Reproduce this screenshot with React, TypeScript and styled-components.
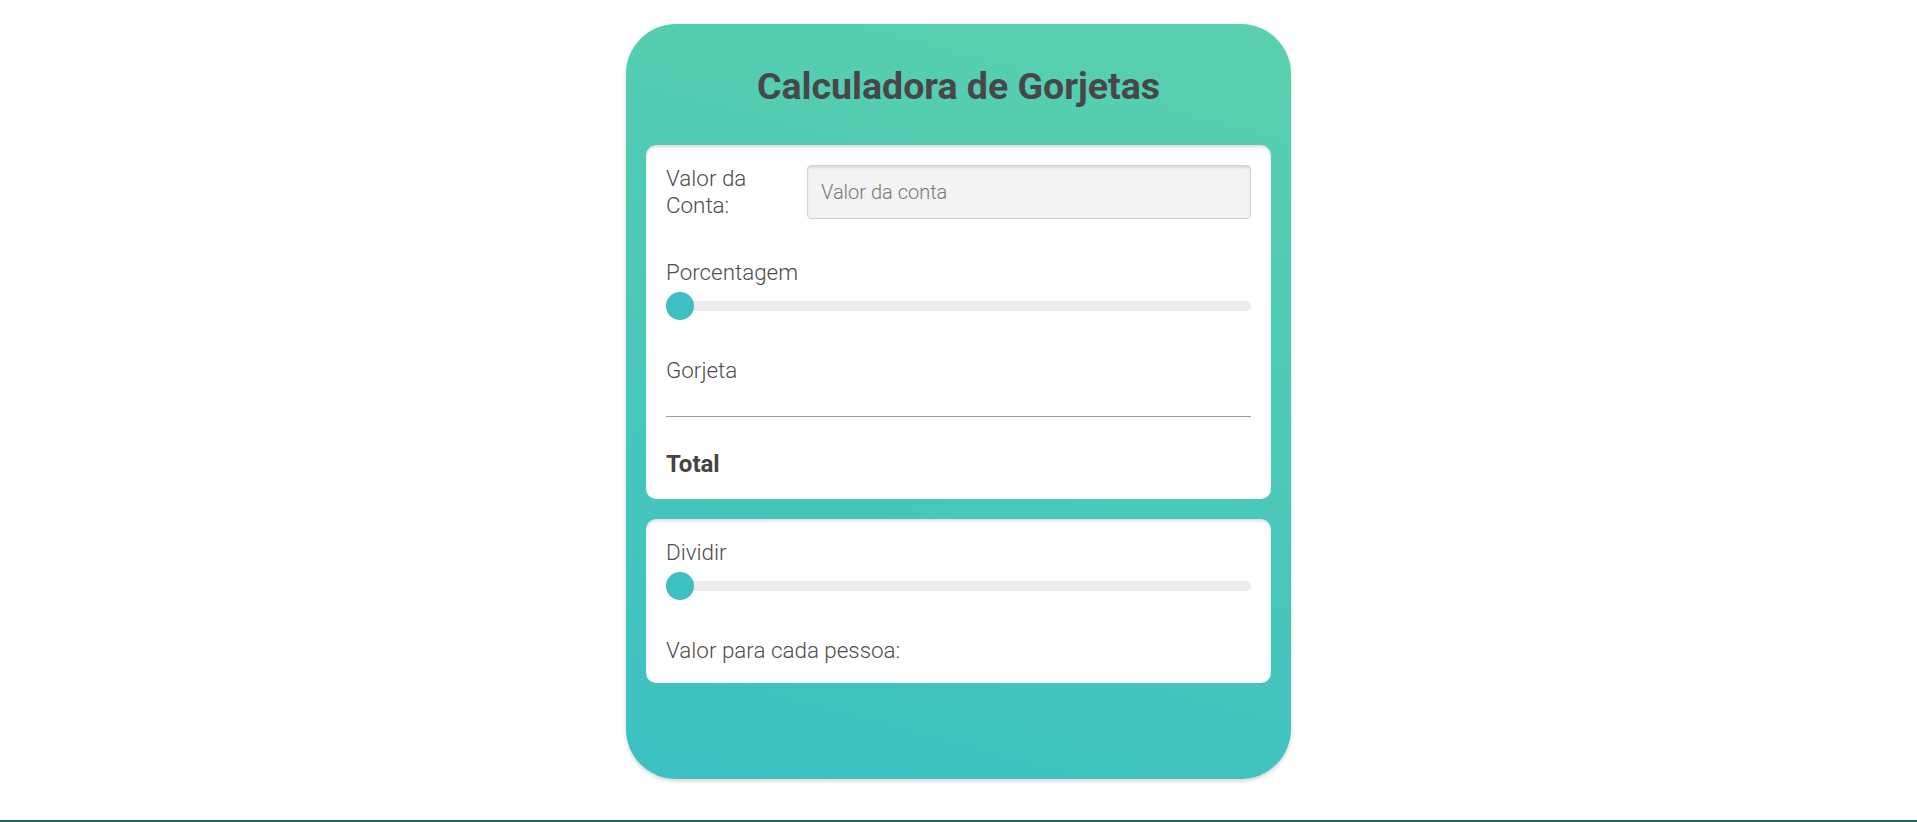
import React, { useState } from "react";
import styled, { createGlobalStyle } from "styled-components";

const GlobalStyle = createGlobalStyle`
    body {
        margin: 0;
        background: #ffffff;
        font-family: Roboto, "Open Sans", Arial, sans-serif;
    }
`;

const Page = styled.main`
    padding-top: 24px;
`;

const Calculator = styled.section`
    width: 665px;
    box-sizing: border-box;
    margin: 0 auto;
    padding: 40px 20px 96px;
    border-radius: 50px;
    background: linear-gradient(15deg, #3cc0c2 0%, #5ad0ae 100%);
    box-shadow: 0 2px 4px rgba(0, 0, 0, 0.18);
`;

const Title = styled.h1`
    margin: 0 0 37px;
    text-align: center;
    font-size: 37.5px;
    font-weight: 700;
    line-height: 44px;
    color: #474747;
`;

const Panel = styled.div<{ $bottom?: number }>`
    background: #ffffff;
    border-radius: 10px;
    padding: 20px 20px ${(p) => p.$bottom ?? 21}px;
    box-shadow: inset 0 2px 3px rgba(0, 0, 0, 0.14);

    & + & {
        margin-top: 20px;
    }
`;

const Row = styled.div`
    display: flex;
    align-items: flex-start;
`;

const Label = styled.label<{ $gap?: number; $bold?: boolean }>`
    display: block;
    margin-top: ${(p) => p.$gap ?? 0}px;
    font-size: ${(p) => (p.$bold ? 24 : 22.4)}px;
    font-weight: ${(p) => (p.$bold ? 700 : 300)};
    line-height: 27px;
    color: ${(p) => (p.$bold ? "#444444" : "#4d4d4d")};
`;

const BillLabel = styled(Label)`
    flex: 0 0 141px;
`;

const BillInput = styled.input`
    flex: 1;
    min-width: 0;
    height: 54px;
    box-sizing: border-box;
    padding: 0 13px;
    border: 1px solid #d2d2d2;
    border-radius: 4px;
    background: #f3f3f3;
    box-shadow: inset 0 2px 2px rgba(0, 0, 0, 0.1);
    font-family: inherit;
    font-size: 20px;
    font-weight: 300;
    color: #444;
    outline: none;

    &::placeholder {
        color: #777777;
    }
`;

const Slider = styled.input`
    display: block;
    width: 100%;
    height: 28px;
    margin: 6px 0 0;
    background: transparent;
    appearance: none;
    -webkit-appearance: none;

    &::-webkit-slider-runnable-track {
        height: 10px;
        border-radius: 5px;
        background: #ececec;
    }

    &::-webkit-slider-thumb {
        -webkit-appearance: none;
        width: 28px;
        height: 28px;
        margin-top: -9px;
        border: none;
        border-radius: 50%;
        background: #3ebfc1;
        cursor: pointer;
    }

    &::-moz-range-track {
        height: 10px;
        border-radius: 5px;
        background: #ececec;
    }

    &::-moz-range-thumb {
        width: 28px;
        height: 28px;
        border: none;
        border-radius: 50%;
        background: #3ebfc1;
    }
`;

const Divider = styled.hr`
    margin: 32px 0 0;
    border: none;
    border-top: 1px solid #9a9a9a;
`;

const Footer = styled.footer`
    margin-top: 41px;
    height: 60px;
    background: #1d6666;
`;

export default function App() {
    const [bill, setBill] = useState("");
    const [percent, setPercent] = useState(0);
    const [people, setPeople] = useState(1);

    return (
        <>
            <GlobalStyle />
            <Page>
                <Calculator>
                    <Title>Calculadora de Gorjetas</Title>
                    <Panel>
                        <Row>
                            <BillLabel htmlFor="conta">Valor da Conta:</BillLabel>
                            <BillInput
                                id="conta"
                                type="text"
                                placeholder="Valor da conta"
                                value={bill}
                                onChange={(e) => setBill(e.target.value)}
                            />
                        </Row>
                        <Label $gap={40}>Porcentagem</Label>
                        <Slider
                            type="range"
                            min={0}
                            max={100}
                            value={percent}
                            onChange={(e) => setPercent(Number(e.target.value))}
                        />
                        <Label $gap={37}>Gorjeta</Label>
                        <Divider />
                        <Label $gap={34} $bold>
                            Total
                        </Label>
                    </Panel>
                    <Panel $bottom={19}>
                        <Label>Dividir</Label>
                        <Slider
                            type="range"
                            min={1}
                            max={20}
                            value={people}
                            onChange={(e) => setPeople(Number(e.target.value))}
                        />
                        <Label $gap={37}>Valor para cada pessoa:</Label>
                    </Panel>
                </Calculator>
                <Footer />
            </Page>
        </>
    );
}
